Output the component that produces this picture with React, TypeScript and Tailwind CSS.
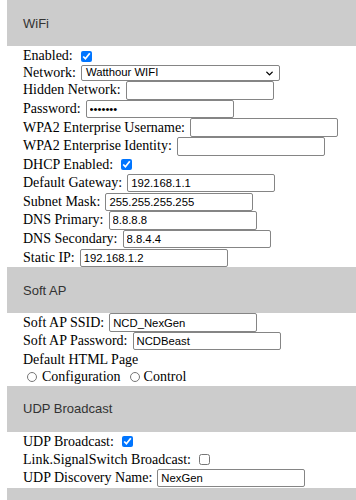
import { ChevronDown } from 'lucide-react';

type Row =
  | { kind: 'check'; label: string; checked: boolean }
  | { kind: 'text'; label: string; value: string; password?: boolean }
  | { kind: 'select'; label: string; value: string }
  | { kind: 'plain'; label: string };

const wifiRows: Row[] = [
  { kind: 'check', label: 'Enabled:', checked: true },
  { kind: 'select', label: 'Network:', value: 'Watthour WIFI' },
  { kind: 'text', label: 'Hidden Network:', value: '' },
  { kind: 'text', label: 'Password:', value: '1234567', password: true },
  { kind: 'text', label: 'WPA2 Enterprise Username:', value: '' },
  { kind: 'text', label: 'WPA2 Enterprise Identity:', value: '' },
  { kind: 'check', label: 'DHCP Enabled:', checked: true },
  { kind: 'text', label: 'Default Gateway:', value: '192.168.1.1' },
  { kind: 'text', label: 'Subnet Mask:', value: '255.255.255.255' },
  { kind: 'text', label: 'DNS Primary:', value: '8.8.8.8' },
  { kind: 'text', label: 'DNS Secondary:', value: '8.8.4.4' },
  { kind: 'text', label: 'Static IP:', value: '192.168.1.2' },
];

const apRows: Row[] = [
  { kind: 'text', label: 'Soft AP SSID:', value: 'NCD_NexGen' },
  { kind: 'text', label: 'Soft AP Password:', value: 'NCDBeast' },
  { kind: 'plain', label: 'Default HTML Page' },
];

const udpRows: Row[] = [
  { kind: 'check', label: 'UDP Broadcast:', checked: true },
  { kind: 'check', label: 'Link.SignalSwitch Broadcast:', checked: false },
  { kind: 'text', label: 'UDP Discovery Name:', value: 'NexGen' },
];

function SectionBar({ title }: { title: string }) {
  return (
    <div className="ml-[7px] h-[46px] bg-[#cccccc] flex items-center pl-4 font-['Liberation_Sans',sans-serif] text-[13px] text-[#333333]">
      {title}
    </div>
  );
}

function FormRow({ row }: { row: Row }) {
  if (row.kind === 'check') {
    return (
      <div className="flex items-center h-[18px] gap-[5px]">
        <span>{row.label}</span>
        <input
          type="checkbox"
          defaultChecked={row.checked}
          className="m-0 ml-[3px] w-[11px] h-[11px] accent-[#0075ff]"
        />
      </div>
    );
  }
  if (row.kind === 'select') {
    return (
      <div className="flex items-center h-4 gap-[5px]">
        <span>{row.label}</span>
        <div className="w-[199px] h-4 border border-[#858585] rounded-[2px] flex items-center justify-between pl-[4px] pr-[4px] font-['Liberation_Sans',sans-serif] text-[11.3px] text-black bg-white">
          <span>{row.value}</span>
          <ChevronDown className="w-[11px] h-[11px]" strokeWidth={3} />
        </div>
      </div>
    );
  }
  if (row.kind === 'plain') {
    return <div className="flex items-center h-[18px]">{row.label}</div>;
  }
  return (
    <div className="flex items-center h-[18.7px] gap-[5px]">
      <span className="whitespace-nowrap">{row.label}</span>
      <input
        type={row.password ? 'password' : 'text'}
        defaultValue={row.value}
        className="w-[148px] h-[18.5px] shrink-0 border border-[#858585] rounded-[2px] px-[3px] font-['Liberation_Sans',sans-serif] text-[11.3px] text-black bg-white outline-none"
      />
    </div>
  );
}

export default function App() {
  return (
    <div className="w-[356px] h-[500px] overflow-hidden bg-white font-['Liberation_Serif',serif] text-[14px] text-black leading-none">
      <SectionBar title="WiFi" />
      <div className="pl-[23px] pt-[1px]">
        {wifiRows.map((r) => (
          <FormRow key={r.label} row={r} />
        ))}
      </div>

      <SectionBar title="Soft AP" />
      <div className="pl-[23px]">
        {apRows.map((r) => (
          <FormRow key={r.label} row={r} />
        ))}
        <div className="flex items-center h-[17px] pl-[4px]">
          <input type="radio" name="page" className="m-0 w-[10px] h-[10px]" />
          <span className="ml-[5px]">Configuration</span>
          <input type="radio" name="page" className="m-0 ml-[9px] w-[10px] h-[10px]" />
          <span className="ml-[4px]">Control</span>
        </div>
      </div>

      <SectionBar title="UDP Broadcast" />
      <div className="pl-[23px] pt-[1px] pb-[1px]">
        {udpRows.map((r) => (
          <FormRow key={r.label} row={r} />
        ))}
      </div>

      <SectionBar title="" />
    </div>
  );
}
